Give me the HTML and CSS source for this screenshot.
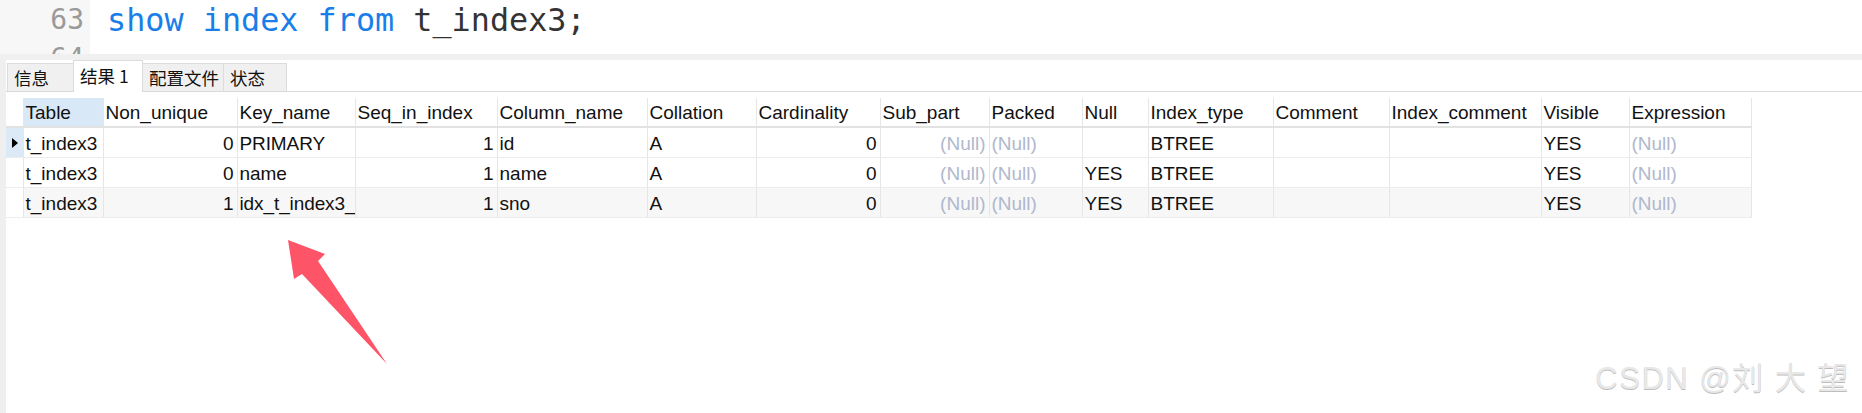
FILE: index.html
```html
<!DOCTYPE html>
<html lang="zh">
<head>
<meta charset="utf-8">
<title>show index</title>
<link rel="stylesheet" href="styles.css">
</head>
<body>
<div class="page">
  <div class="editor">
    <div class="gutter">
      <div class="ln">63</div>
      <div class="ln">64</div>
    </div>
    <div class="code">
      <div class="line"><span class="kw">show</span> <span class="kw">index</span> <span class="kw">from</span> t_index3;</div>
      <div class="line"></div>
    </div>
  </div>
  <div class="splitter"></div>
  <div class="results">
    <div class="strip"></div>
    <div class="panel">
      <div class="tabs">
        <div class="tab t1">信息</div>
        <div class="tab t2 active">结果 1</div>
        <div class="tab t3">配置文件</div>
        <div class="tab t4">状态</div>
      </div>
      <table class="grid">
        <colgroup>
          <col class="w-ind"><col class="w-table"><col class="w-nonu"><col class="w-key"><col class="w-seq"><col class="w-col"><col class="w-coll"><col class="w-card"><col class="w-sub"><col class="w-pack"><col class="w-null"><col class="w-itype"><col class="w-com"><col class="w-icom"><col class="w-vis"><col class="w-expr">
        </colgroup>
        <thead>
          <tr>
            <th class="ind"></th>
            <th class="sel">Table</th><th>Non_unique</th><th>Key_name</th><th>Seq_in_index</th><th>Column_name</th><th>Collation</th><th>Cardinality</th><th>Sub_part</th><th>Packed</th><th>Null</th><th>Index_type</th><th>Comment</th><th>Index_comment</th><th>Visible</th><th>Expression</th>
          </tr>
        </thead>
        <tbody>
          <tr>
            <td class="ind cur"><span class="tri"></span></td>
            <td>t_index3</td><td class="num">0</td><td class="key">PRIMARY</td><td class="num">1</td><td>id</td><td>A</td><td class="num">0</td><td class="num nul">(Null)</td><td class="nul">(Null)</td><td></td><td>BTREE</td><td></td><td></td><td>YES</td><td class="nul">(Null)</td>
          </tr>
          <tr>
            <td class="ind"></td>
            <td>t_index3</td><td class="num">0</td><td class="key">name</td><td class="num">1</td><td>name</td><td>A</td><td class="num">0</td><td class="num nul">(Null)</td><td class="nul">(Null)</td><td>YES</td><td>BTREE</td><td></td><td></td><td>YES</td><td class="nul">(Null)</td>
          </tr>
          <tr class="alt">
            <td class="ind"></td>
            <td>t_index3</td><td class="num">1</td><td class="key">idx_t_index3_</td><td class="num">1</td><td>sno</td><td>A</td><td class="num">0</td><td class="num nul">(Null)</td><td class="nul">(Null)</td><td>YES</td><td>BTREE</td><td></td><td></td><td>YES</td><td class="nul">(Null)</td>
          </tr>
        </tbody>
      </table>
    </div>
  </div>
  <svg class="arrow" width="1862" height="413" viewBox="0 0 1862 413" aria-hidden="true">
    <polygon points="288,240 325,254 318,261 387,364 302,274 294,279" fill="#fe5468"/>
  </svg>
  <div class="watermark">CSDN @刘 大 望</div>
</div>
</body>
</html>
```

FILE: styles.css
```css
html, body {
  margin: 0;
  padding: 0;
  background: #ffffff;
}

.page {
  position: relative;
  width: 1862px;
  height: 413px;
  overflow: hidden;
  display: flex;
  flex-direction: column;
  font-family: "Liberation Sans", "Noto Sans CJK SC", sans-serif;
}

/* editor */
.editor {
  height: 54px;
  display: flex;
  overflow: hidden;
  background: #ffffff;
  flex: none;
}

.gutter {
  width: 90px;
  background: #f7f7f7;
  flex: none;
}

.ln {
  height: 39px;
  line-height: 39px;
  text-align: right;
  padding-right: 6px;
  font-family: "DejaVu Sans Mono", monospace;
  font-size: 28px;
  color: #9a9a9a;
}

.code {
  padding-left: 17px;
}

.line {
  height: 39px;
  line-height: 39px;
  font-family: "DejaVu Sans Mono", monospace;
  font-size: 31.8px;
  color: #333333;
  white-space: pre;
}

.kw {
  color: #1a7ee8;
}

.splitter {
  height: 6px;
  background: #f0f0f0;
  flex: none;
}

/* results */
.results {
  flex: 1;
  display: flex;
}

.strip {
  width: 6px;
  background: #efefef;
  flex: none;
}

.panel {
  flex: 1;
  display: flex;
  flex-direction: column;
}

.tabs {
  height: 32px;
  display: flex;
  align-items: flex-end;
  border-bottom: 1px solid #dadada;
  box-sizing: border-box;
  padding-left: 1px;
}

.tab {
  height: 28px;
  line-height: 28px;
  box-sizing: border-box;
  background: #f0f0f0;
  border: 1px solid #dcdcdc;
  border-bottom: none;
  font-family: "Noto Sans CJK SC", sans-serif;
  font-size: 17.5px;
  color: #111111;
  padding-left: 6px;
  margin-right: -1px;
}

.tab.active {
  height: 32px;
  line-height: 30px;
  background: #ffffff;
  margin-bottom: -1px;
  position: relative;
}

.t1 { width: 67px; }
.t2 { width: 70px; }
.t3 { width: 82px; }
.t4 { width: 64px; }

/* grid */
.grid {
  margin-top: 6px;
  border-collapse: collapse;
  table-layout: fixed;
  width: 1745px;
  font-size: 19px;
  color: #111111;
}

.grid th, .grid td {
  padding: 2px 3px 0 2px;
  white-space: nowrap;
  overflow: hidden;
  text-align: left;
  font-weight: normal;
  border-left: 1px solid #e6e6e6;
  border-bottom: 1px solid #ececec;
  vertical-align: top;
}

.grid th {
  height: 26px;
  line-height: 26px;
  border-bottom: 2px solid #e2e2e2;
  background: #ffffff;
}

.grid td {
  height: 27px;
  line-height: 27px;
}

.grid td.key {
  padding-right: 0;
  letter-spacing: -0.1px;
}

.grid th.sel {
  background: #d9e8f7;
}

.grid th.ind {
  border-left: none;
  border-bottom: 2px solid #e2e2e2;
}

.grid td.ind {
  border-left: none;
  padding: 0;
  height: 29px;
  vertical-align: middle;
}

.grid td.cur {
  background: #dce9f6;
}

.grid th:last-child, .grid td:last-child {
  border-right: 1px solid #e6e6e6;
}

.tri {
  display: block;
  width: 0;
  height: 0;
  margin-left: 6px;
  border-left: 6px solid #000000;
  border-top: 5px solid transparent;
  border-bottom: 5px solid transparent;
}

.grid td.num {
  text-align: right;
}

.grid td.nul {
  color: #b0b8cc;
}

.grid tr.alt td {
  background: #f7f7f7;
}

.grid tr.alt td.ind {
  background: #ffffff;
}

.w-ind { width: 17px; }
.w-table { width: 80px; }
.w-nonu { width: 134px; }
.w-key { width: 118px; }
.w-seq { width: 142px; }
.w-col { width: 150px; }
.w-coll { width: 109px; }
.w-card { width: 124px; }
.w-sub { width: 109px; }
.w-pack { width: 93px; }
.w-null { width: 66px; }
.w-itype { width: 125px; }
.w-com { width: 116px; }
.w-icom { width: 152px; }
.w-vis { width: 88px; }
.w-expr { width: 122px; }

/* overlays */
.arrow {
  position: absolute;
  left: 0;
  top: 0;
  pointer-events: none;
}

.watermark {
  position: absolute;
  right: 12px;
  bottom: 15px;
  font-family: "Liberation Sans", "Noto Sans CJK SC", sans-serif;
  font-size: 31px;
  letter-spacing: 1.5px;
  color: #e8e8e8;
  text-shadow: 0 1px 0 #bdbdbd;
  white-space: pre;
}
```
